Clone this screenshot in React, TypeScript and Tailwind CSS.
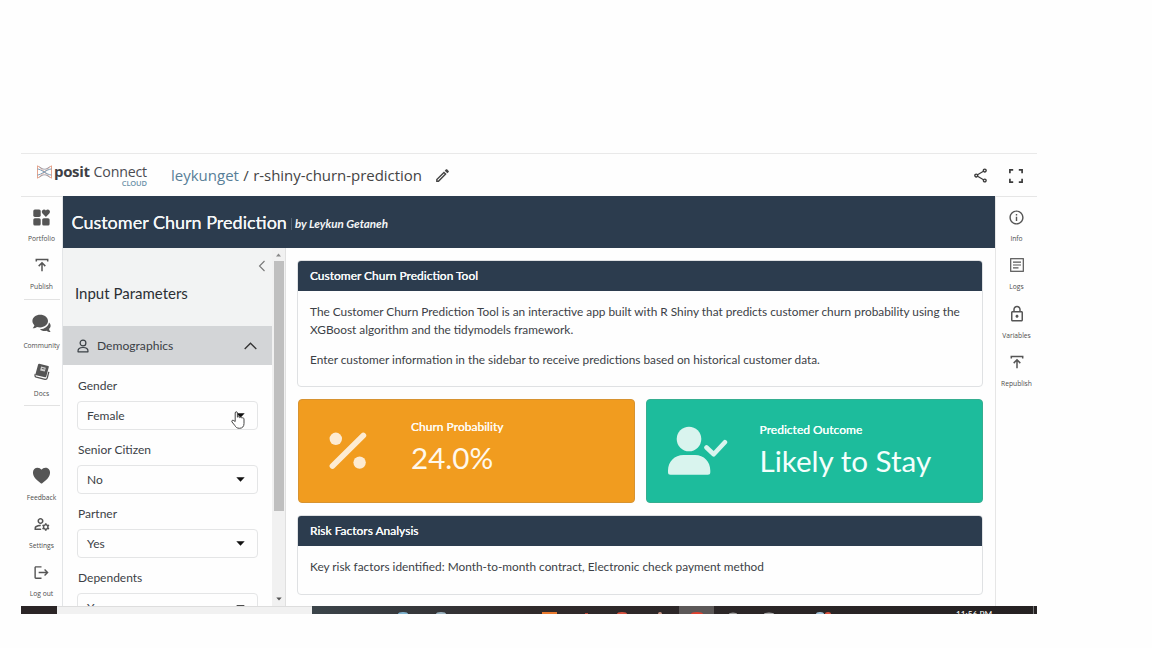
import type { ReactNode } from "react";
import { MdOutlineEdit, MdOutlineShare, MdOutlineInfo, MdOutlineLock, MdOutlineManageAccounts, MdLogout } from "react-icons/md";
import { IoHeart } from "react-icons/io5";

function PortfolioIcon() {
  return (
    <svg width="17" height="17" viewBox="0 0 17 17" fill="currentColor">
      <rect x="0.3" y="0.5" width="7.4" height="7.4" rx="1.6" />
      <rect x="0.3" y="9.2" width="7.4" height="7.4" rx="1.6" />
      <rect x="9.2" y="9.2" width="7.4" height="7.4" rx="1.6" />
      <path d="M12.9 7.9 9.5 4.5C7.9 2.7 9.3.5 11 .5c.9 0 1.5.4 1.9 1 .4-.6 1-1 1.9-1 1.8 0 3 2.2 1.5 4z" />
    </svg>
  );
}

function PublishIcon() {
  return (
    <svg width="14" height="14" viewBox="0 0 14 14" fill="none" stroke="currentColor" strokeWidth="1.5">
      <path d="M1.3 3.6V1.5h11.4v2.1M7 13.3V5M3.7 8.1 7 4.8l3.3 3.3" />
    </svg>
  );
}

function ChatIcon() {
  return (
    <svg width="19" height="19" viewBox="0 0 19 19" fill="currentColor">
      <path d="M8.2.8C12.5.8 16 3.5 16 7.1s-3.5 6.3-7.8 6.3c-1.2 0-2.3-.2-3.2-.5-1 .7-2.5 1.3-4.3 1.3.8-.8 1.5-2 1.7-3C1.2 10.1.4 8.7.4 7.1.4 3.5 3.9.8 8.2.8z" />
      <path d="M17 8.6c1 .9 1.6 2 1.6 3.2 0 1.3-.6 2.4-1.6 3.2.2 1 .8 2.2 1.6 3-1.7 0-3.1-.6-4.1-1.3-2.3.6-5 .2-6.6-1.5C12.5 15.3 16.3 12.7 17 8.6z" />
    </svg>
  );
}

function DocsIcon() {
  return (
    <svg width="16" height="18" viewBox="0 0 16 18" fill="none">
      <path d="M5.3.8 14.2 3c.5.1.7.5.6 1L12.3 13.6c-.2.6-.6.8-1.2.7L2.2 12.2c-.6-.2-.8-.6-.7-1.2L4.1 1.5c.2-.6.6-.8 1.2-.7z" fill="currentColor" />
      <path d="m7.1 3.6 4.7 1.1-1 3.8-4.700-1.1z" fill="#d0d0d0" />
      <path d="m7.8 5.4 2.8.7" stroke="currentColor" strokeWidth=".9" />
      <path d="M1.3 11c-.6 1.6-.4 2.7 1 3.2l8.7 2.2c1.2.2 2-.4 2.3-1.6l1.5-6" stroke="currentColor" strokeWidth="1.3" />
    </svg>
  );
}

function LogsIcon() {
  return (
    <svg width="14" height="14" viewBox="0 0 14 14" fill="none" stroke="currentColor">
      <rect x=".7" y=".7" width="12.6" height="12.6" strokeWidth="1.2" />
      <path d="M3 4.2h8M3 7h8M3 9.8h5.5" strokeWidth="1.2" />
    </svg>
  );
}

function FullscreenIcon() {
  return (
    <svg width="14" height="14" viewBox="0 0 14 14" fill="none" stroke="currentColor" strokeWidth="1.7">
      <path d="M.9 4.2V.9h3.3M9.8.9h3.3v3.3M13.1 9.8v3.3H9.8M4.2 13.1H.9V9.8" />
    </svg>
  );
}

function PositMark() {
  return (
    <svg width="15" height="14" viewBox="0 0 15 14" fill="none" strokeWidth=".9">
      <path d="M.5.8C4 2.4 11 11.6 14.5 13.2V.8C11 2.4 4 11.6.5 13.2z" stroke="#e39a80" />
      <path d="M.5 4C4 4 10 10 14.5 10M.5 10C4 10 10 4 14.5 4" stroke="#6f97b5" />
      <path d="M2.5 1.8C6 5 9 5 12.5 1.8M2.5 12.2C6 9 9 9 12.5 12.2" stroke="#8f8f9b" />
    </svg>
  );
}

function PersonIcon() {
  return (
    <svg width="12" height="14" viewBox="0 0 12 14" fill="none" stroke="currentColor" strokeWidth="1.2">
      <circle cx="6" cy="4" r="2.9" />
      <path d="M1 12.8c-.3-3 1.6-4.3 5-4.3s5.3 1.3 5 4.3z" strokeLinejoin="round" />
    </svg>
  );
}

function PercentIcon() {
  return (
    <svg width="38" height="38" viewBox="0 0 38 38" fill="currentColor">
      <circle cx="6.8" cy="6.8" r="6.2" />
      <circle cx="30.6" cy="30.6" r="6.2" />
      <path d="M3.5 34 34.3 3.5" stroke="currentColor" strokeWidth="5.8" strokeLinecap="round" />
    </svg>
  );
}

function PersonCheckIcon() {
  return (
    <svg className="shrink-0" width="60" height="50" viewBox="0 0 60 50" fill="currentColor">
      <circle cx="21" cy="13" r="12.3" />
      <path d="M15.500 28.900h11.500c9 0 15.300 6.500 15.300 15.500v1.800c0 1.700-.8 2.500-2.500 2.500H2.500C.8 48.700 0 47.900 0 46.200v-1.800c0-9 6.500-15.500 15.500-15.500z" />
      <path d="m38.500 21.500 7.200 6.700 11.200-12" fill="none" stroke="currentColor" strokeWidth="4.6" strokeLinecap="round" strokeLinejoin="round" />
    </svg>
  );
}

function HandPointer() {
  return (
    <svg width="15" height="18" viewBox="0 0 15 18" fill="#fff" stroke="#444" strokeWidth="1" strokeLinejoin="round">
      <path d="M4.2 10.5V2c0-1.7 2.2-1.7 2.2 0v4.2c.4-.8 2-.7 2.200.4.6-.8 2-.5 2.200.5.8-.7 2-.3 2.200.8v4.6c0 2.8-1.5 4.8-4.5 4.8-2.6 0-3.7-1.1-4.8-3L1 11c-.8-1.400.8-2.400 1.800-1.400z" />
    </svg>
  );
}

function RailItem({ icon, label }: { icon: ReactNode; label: string }) {
  return (
    <div className="flex h-[48.4px] w-full shrink-0 flex-col items-center gap-[7px] text-[#555]">
      <div className="flex h-5 items-center justify-center">{icon}</div>
      <div className="whitespace-nowrap text-[6.7px] leading-[10px] text-[#4c4c4c]">{label}</div>
    </div>
  );
}

function Field({ label, value, children }: { label: string; value: string; children?: ReactNode }) {
  return (
    <div className="h-16 shrink-0">
      <div className="h-[23px] pl-px text-[12px] leading-[15px]">{label}</div>
      <div className="relative flex h-[29px] items-center justify-between rounded-[4px] border border-[#e4e5e6] pl-[9px] pr-3 text-[12px]">
        <span>{value}</span>
        <svg width="9" height="5" viewBox="0 0 9 5"><path d="M.3.3h8.4L4.5 4.7z" fill="#111" /></svg>
        {children}
      </div>
    </div>
  );
}

function Panel({ title, className, children }: { title: string; className: string; children: ReactNode }) {
  return (
    <section className={`-ml-px shrink-0 overflow-hidden rounded-[4px] border border-[#dfe1e3] ${className}`}>
      <h2 className="flex h-[30px] shrink-0 items-center bg-[#2c3c4e] pl-3 text-[11.95px] font-medium text-[#f5f7f8] [text-shadow:0_0_0.6px_#fff]">{title}</h2>
      {children}
    </section>
  );
}

export default function App() {
  return (
    <div className="h-[648px] w-[1152px] overflow-hidden bg-[#fefefe] pl-[21px] pt-[153px] font-['Lato',sans-serif] text-[#3c4146]">
      <div className="flex h-[461px] w-[1016px] flex-col overflow-hidden border-t border-[#e9e9e9] bg-[#fefefe]">
        <header className="flex h-[42px] shrink-0 items-center font-['Open_Sans',sans-serif]">
          <div className="flex w-[150px] items-start pl-4">
            <div className="pt-[3px]"><PositMark /></div>
            <div className="ml-[2px] flex h-[26px] flex-col items-end">
              <div className="flex h-[17px] items-start gap-1 leading-[19px]">
                <span className="text-[15px] font-bold tracking-[-0.35px] text-[#3f3f45]">posit</span>
                <span className="text-[14.2px] tracking-[-0.2px] text-[#4b4b52]">Connect</span>
              </div>
              <span className="text-[7.5px] font-semibold leading-[8px] tracking-[-0.15px] text-[#6991a8]">CLOUD</span>
            </div>
          </div>
          <div className="flex items-center whitespace-pre text-[15px] text-[#444]">
            <span className="text-[#587f98]">leykunget</span>
            <span className="px-[0.5px]"> / </span>
            <span className="tracking-[-0.04px]">r-shiny-churn-prediction</span>
          </div>
          <MdOutlineEdit className="ml-3 text-[17px] text-[#444]" />
          <div className="ml-auto flex items-center gap-[20px] pr-[14px] pt-px text-[#3c3c3c]">
            <MdOutlineShare className="text-[17px]" />
            <FullscreenIcon />
          </div>
        </header>

        <div className="flex h-[410px] shrink-0">
          <nav className="flex w-[41px] shrink-0 flex-col items-center border-t border-[#e6e6e6] pt-[10px] font-['Open_Sans',sans-serif]">
            <RailItem icon={<PortfolioIcon />} label="Portfolio" />
            <RailItem icon={<PublishIcon />} label="Publish" />
            <div className="-mt-[5px] mb-[14px] h-px w-9 shrink-0 bg-[#e2e2e2]" />
            <RailItem icon={<ChatIcon />} label="Community" />
            <RailItem icon={<DocsIcon />} label="Docs" />
            <div className="-mt-[6px] mb-[60px] h-px w-9 shrink-0 bg-[#e2e2e2]" />
            <RailItem icon={<IoHeart className="text-[21px]" />} label="Feedback" />
            <RailItem icon={<MdOutlineManageAccounts className="text-[18px]" />} label="Settings" />
            <RailItem icon={<MdLogout className="text-[17px]" />} label="Log out" />
          </nav>

          <div className="flex w-[933px] shrink-0 flex-col border-l border-[#e3e5e7]">
            <div className="flex h-[52px] shrink-0 items-center bg-[#2c3c4e] pl-[8.5px] text-[#f4f6f7]">
              <h1 className="whitespace-nowrap pt-px text-[18px] [text-shadow:0_0_0.6px_#fff]">Customer Churn Prediction</h1>
              <div className="ml-1 mr-[3px] mt-1 h-3 w-px bg-[#536171]" />
              <em className="mt-[4px] text-[11.6px] font-bold">by Leykun Getaneh</em>
            </div>
            <div className="flex h-[358px]">
              <aside className="flex w-[223px] shrink-0 border-r border-[#e0e0e0]">
                <div className="flex w-[209px] flex-col overflow-hidden">
                  <div className="h-[78px] shrink-0 bg-[#f2f3f3] pl-3">
                    <svg className="ml-auto mr-[6px] mt-[12px]" width="8" height="12" viewBox="0 0 8 12" fill="none" stroke="#777" strokeWidth="1.1"><path d="M6.5 1 1.5 6l5 5" /></svg>
                    <h2 className="mt-[11px] text-[15px] leading-5 text-[#2b2f33]">Input Parameters</h2>
                  </div>
                  <div className="flex h-[39px] shrink-0 items-center bg-[#d3d5d7] pl-[14px] pr-[15px] pt-px text-[12.1px] text-[#3a4045]">
                    <PersonIcon />
                    <span className="ml-2">Demographics</span>
                    <svg className="ml-auto" width="13" height="8" viewBox="0 0 13 8" fill="none" stroke="#333" strokeWidth="1.3"><path d="M.7 7 6.5 1.2 12.3 7" /></svg>
                  </div>
                  <div className="flex flex-col pl-[14px] pr-[14px] pt-[13px]">
                    <Field label="Gender" value="Female">
                      <div className="absolute left-[153px] top-[9px]"><HandPointer /></div>
                    </Field>
                    <Field label="Senior Citizen" value="No" />
                    <Field label="Partner" value="Yes" />
                    <Field label="Dependents" value="Yes" />
                  </div>
                </div>
                <div className="flex flex-1 flex-col items-center bg-[#f1f1f1]">
                  <svg className="mt-[5px] shrink-0" width="5" height="4" viewBox="0 0 5 4"><path d="M0 3.5h5L2.5.5z" fill="#888" /></svg>
                  <div className="mt-[4px] h-[250px] w-[10px] bg-[#bfbfbf]" />
                  <svg className="mb-[5px] mt-auto shrink-0" width="6" height="4" viewBox="0 0 6 4"><path d="M.3.5h5.4L3 3.5z" fill="#555" /></svg>
                </div>
              </aside>

              <main className="flex flex-1 flex-col pl-[12px] pr-[12px] pt-3">
                <Panel title="Customer Churn Prediction Tool" className="h-[127px]">
                  <div className="pl-3 pt-3 text-[11.83px] leading-[18px]">
                    <p className="whitespace-nowrap">The Customer Churn Prediction Tool is an interactive app built with R Shiny that predicts customer churn probability using the<br />XGBoost algorithm and the tidymodels framework.</p>
                    <p className="mt-3">Enter customer information in the sidebar to receive predictions based on historical customer data.</p>
                  </div>
                </Panel>
                <div className="mt-3 flex h-[104px] shrink-0 gap-[11px]">
                  <div className="flex w-[337px] items-center rounded-[4px] border border-[#d79331] bg-[#f19c1f] pl-[30px] text-[#fdebd2]">
                    <PercentIcon />
                    <div className="ml-[44px] pb-[8px] text-[#fff8ec]">
                      <div className="text-[12px] font-medium leading-[18px] [text-shadow:0_0_0.6px_#fff]">Churn Probability</div>
                      <div className="mt-[4px] text-[29.6px] leading-9">24.0%</div>
                    </div>
                  </div>
                  <div className="flex w-[337px] items-center rounded-[4px] border border-[#35ae90] bg-[#1dbc9c] pl-[21px] text-[#d9f4ee]">
                    <PersonCheckIcon />
                    <div className="ml-[31.5px] whitespace-nowrap pb-[2px] text-[#f4fffc]">
                      <div className="text-[12px] font-medium leading-[18px] [text-shadow:0_0_0.6px_#fff]">Predicted Outcome</div>
                      <div className="mt-[4px] text-[29.6px] leading-9">Likely to Stay</div>
                    </div>
                  </div>
                </div>
                <Panel title="Risk Factors Analysis" className="mt-3 h-[80px]">
                  <p className="pl-3 pt-3 text-[11.83px] leading-[18px]">Key risk factors identified: Month-to-month contract, Electronic check payment method</p>
                </Panel>
              </main>
            </div>
          </div>

          <nav className="flex w-[42px] shrink-0 flex-col items-center border-l border-t border-[#e6e6e6] pt-[10px] font-['Open_Sans',sans-serif]">
            <RailItem icon={<MdOutlineInfo className="text-[17px]" />} label="Info" />
            <RailItem icon={<LogsIcon />} label="Logs" />
            <RailItem icon={<MdOutlineLock className="text-[18px]" />} label="Variables" />
            <RailItem icon={<PublishIcon />} label="Republish" />
          </nav>
        </div>

        <footer className="flex h-2 shrink-0 overflow-hidden bg-[#302a2b]">
          <div className="h-full w-9 bg-[#2b2526]" />
          <div className="h-full w-[255px] border-t border-[#ddd] bg-[#f1f1f1]" />
          <div className="relative h-full flex-1 bg-linear-to-r from-[#3b444a] via-[#302a2b] via-30% to-[#252122]">
            <svg width="725" height="8" viewBox="0 0 725 8">
              <rect x="367" y="0" width="35" height="8" fill="#5c5858" />
              <ellipse cx="91" cy="8" rx="5" ry="2" fill="#7fb3cf" />
              <ellipse cx="129" cy="8" rx="5" ry="2" fill="#9bb3c0" />
              <rect x="230" y="6" width="15" height="2" fill="#e8792e" />
              <rect x="273" y="7" width="3" height="1" fill="#c44a3a" />
              <ellipse cx="310" cy="8" rx="5" ry="2" fill="#d8523f" />
              <ellipse cx="348" cy="8" rx="2" ry="2" fill="#c98" />
              <ellipse cx="385" cy="8" rx="6" ry="2" fill="#e2412f" />
              <ellipse cx="421" cy="8" rx="4" ry="1.5" fill="#999" />
              <ellipse cx="457" cy="8" rx="5" ry="1.5" fill="#aaa" />
              <ellipse cx="508" cy="8" rx="4" ry="2" fill="#a3c4da" />
              <ellipse cx="516" cy="8" rx="3" ry="2" fill="#d8523f" />
              <rect x="721" y="0" width="1" height="8" fill="#777" />
            </svg>
            <span className="absolute left-[644px] top-[3px] whitespace-nowrap text-[8.3px] leading-[10px] text-white">11:56 PM</span>
          </div>
        </footer>
      </div>
    </div>
  );
}
